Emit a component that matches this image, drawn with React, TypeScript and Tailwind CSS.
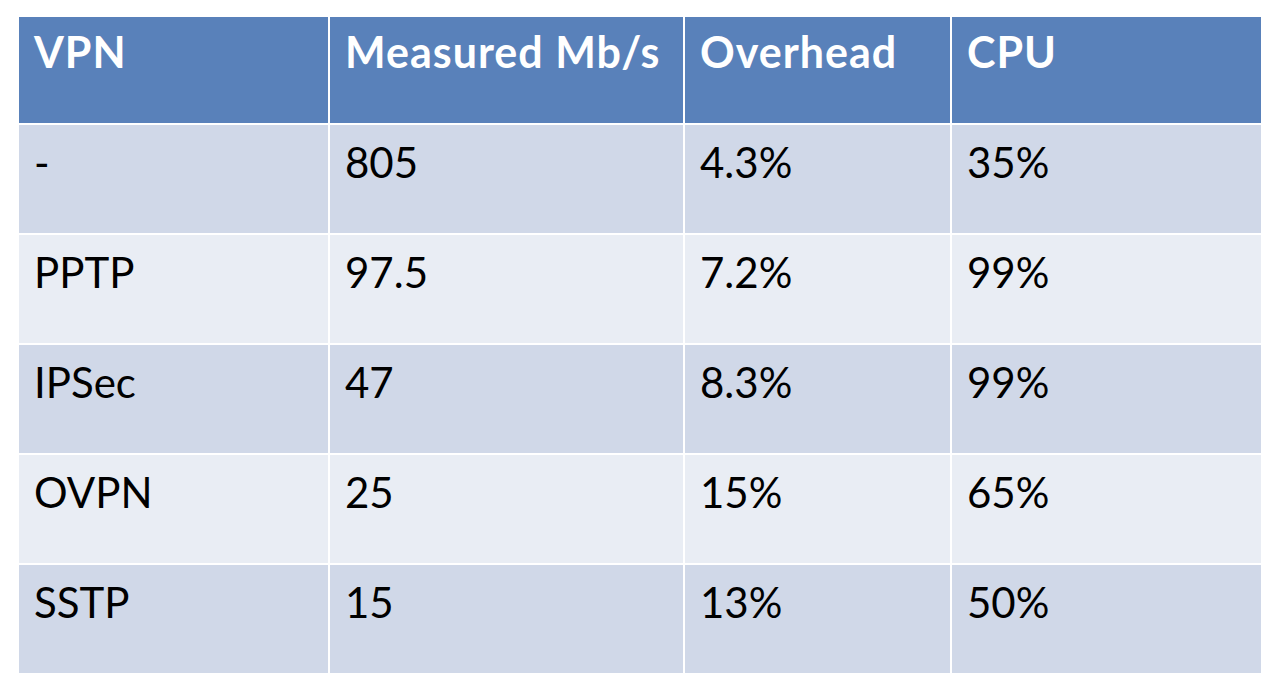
const header = ["VPN", "Measured Mb/s", "Overhead", "CPU"]

const rows = [
  ["-", "805", "4.3%", "35%"],
  ["PPTP", "97.5", "7.2%", "99%"],
  ["IPSec", "47", "8.3%", "99%"],
  ["OVPN", "25", "15%", "65%"],
  ["SSTP", "15", "13%", "50%"],
]

export default function App() {
  return (
    <div className="h-[690px] w-[1280px] bg-white pl-[19px] pt-[17px]" style={{ fontFamily: "Lato, 'Open Sans', sans-serif" }}>
      <div className="grid w-[1242px] grid-cols-[309px_353px_265px_309px] grid-rows-[106px_repeat(5,108px)] gap-[2px] bg-white">
        {header.map((h) => (
          <div key={h} className="bg-[#5981ba] pl-[15px] pt-[13px] text-[43px] font-bold leading-none tracking-[1px] text-white">
            {h}
          </div>
        ))}
        {rows.map((row, i) =>
          row.map((cell, j) => (
            <div
              key={`${i}-${j}`}
              className={`${i % 2 === 0 ? "bg-[#d0d8e8]" : "bg-[#e9edf4]"} pl-[15px] pt-[16px] text-[42px] leading-none text-black`}
            >
              {cell}
            </div>
          ))
        )}
      </div>
    </div>
  )
}
